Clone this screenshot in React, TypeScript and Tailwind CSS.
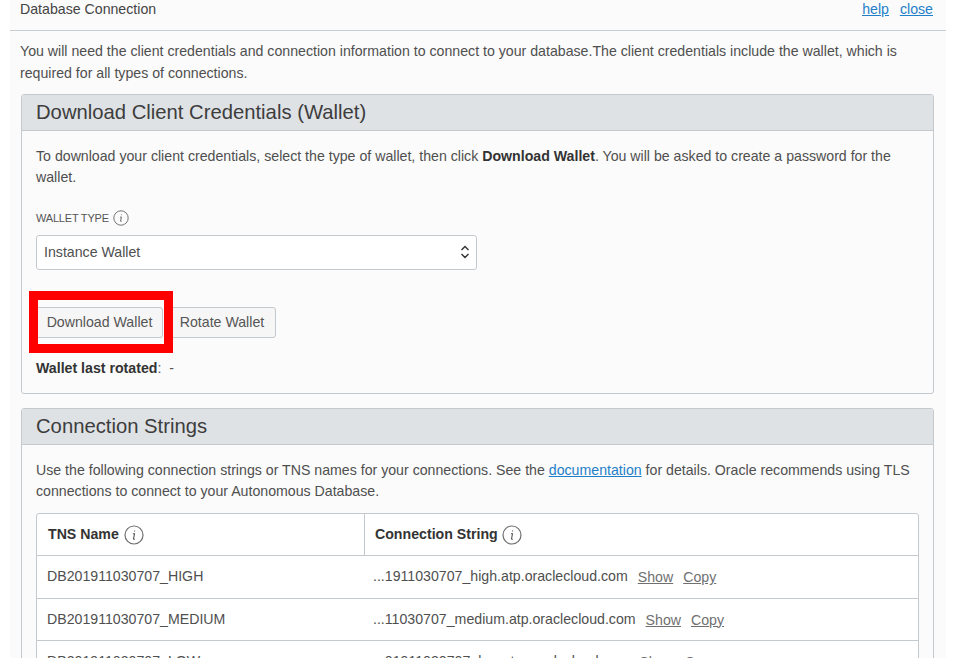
import React from "react";

const font = { fontFamily: '"Liberation Sans", Arial, sans-serif' };

const InfoIcon = ({ size }: { size: number }) => (
  <svg width={size} height={size} viewBox="0 0 20 20" fill="none" className="shrink-0">
    <circle cx="10" cy="10" r="9" stroke="#6f6f6f" strokeWidth="1.2" />
    <path d="M10.6 5.6v.9M8.9 8.8h1.6l-1 5c-.1.5.3.6 1.3.2" stroke="#555" strokeWidth="1.1" fill="none" />
  </svg>
);

const rows = [
  { name: "DB201911030707_HIGH", conn: "...1911030707_high.atp.oraclecloud.com" },
  { name: "DB201911030707_MEDIUM", conn: "...11030707_medium.atp.oraclecloud.com" },
  { name: "DB201911030707_LOW", conn: "...01911030707_low.atp.oraclecloud.com" },
];

const Card = ({ title, className, children }: { title: string; className?: string; children: React.ReactNode }) => (
  <section className={`ml-[11px] mr-[12px] rounded-[3px] border border-[#c4c9ce] ${className ?? ""}`}>
    <h2 className="flex h-[36px] items-center rounded-t-[3px] border-b border-[#c4c9ce] bg-[#dfe2e5] pl-[14px] text-[20.25px] font-normal text-[#3d3d3d]">
      {title}
    </h2>
    {children}
  </section>
);

export default function App() {
  return (
    <div className="h-[668px] overflow-hidden bg-white text-[14.16px] text-[#4f4f4f]" style={font}>
      <div className="ml-[10px] h-[658px] w-[936px] overflow-hidden bg-[#fbfbfb]">
        <header className="flex h-[31px] items-start justify-between border-b border-[#c9ced3] pr-[13px] pl-[10px] pt-[1px] leading-[16px]">
          <span className="text-[#444]">Database Connection</span>
          <span className="flex gap-[11px] text-[#1f7fc9] underline">
            <a href="#">help</a>
            <a href="#">close</a>
          </span>
        </header>

        <p className="mt-[9px] h-[54px] pl-[10px] pr-[30px] leading-[22px]">
          You will need the client credentials and connection information to connect to your database.The client
          credentials include the wallet, which is required for all types of connections.
        </p>

        <Card title="Download Client Credentials (Wallet)" className="h-[300px]">
          <div className="px-[14px] pt-[15px]">
            <p className="pr-[20px] leading-[21px]">
              To download your client credentials, select the type of wallet, then click{" "}
              <b className="text-[#333]">Download Wallet</b>. You will be asked to create a password for the wallet.
            </p>
            <div className="mt-[22px] flex items-center gap-[4px] text-[11px] tracking-[-0.2px] text-[#555]">
              WALLET TYPE <InfoIcon size={16} />
            </div>
            <div className="mt-[8px] flex h-[35px] w-[441px] items-center justify-between rounded-[3px] border border-[#c4c9ce] bg-white pl-[7px] pr-[6px]">
              <span className="pt-[2px]">Instance Wallet</span>
              <svg width="10" height="16" viewBox="0 0 10 16" fill="none" stroke="#333" strokeWidth="1.4">
                <path d="M1.5 6 5 2.5 8.500 6M1.5 10 5 13.500 8.500 10" />
              </svg>
            </div>
            <div className="relative mt-[37px] flex gap-[7px]">
              <button className="h-[31px] w-[127px] rounded-[3px] border border-[#c4c9ce] bg-[#f6f6f6] pt-[2px] text-[#555]">
                Download Wallet
              </button>
              <button className="h-[31px] w-[106px] rounded-[3px] border border-[#c4c9ce] bg-[#f6f6f6] pt-[2px] pr-[2px] text-[#555]">
                Rotate Wallet
              </button>
              <div className="pointer-events-none absolute left-[-7px] top-[-16px] h-[62px] w-[144px] border-[9px] border-[#ff0000]" />
            </div>
            <p className="mt-[22px] leading-[16px] text-[#333]">
              <b>Wallet last rotated</b>
              <span className="text-[#555]">:&nbsp;&nbsp;-</span>
            </p>
          </div>
        </Card>

        <Card title="Connection Strings" className="mt-[14px]">
          <div className="px-[14px] pt-[15px]">
            <p className="pr-[5px] leading-[21px]">
              Use the following connection strings or TNS names for your connections. See the{" "}
              <a href="#" className="text-[#1f7fc9] underline">documentation</a> for details. Oracle recommends using
              TLS connections to connect to your Autonomous Database.
            </p>
            <div className="mt-[11px] rounded-[3px] border border-[#c4c9ce] bg-white">
              <div className="grid h-[42px] grid-cols-[328px_1fr] border-b border-[#c4c9ce] font-bold text-[#333]">
                <div className="flex items-center gap-[5px] border-r border-[#c4c9ce] pl-[11px]">
                  TNS Name <InfoIcon size={20} />
                </div>
                <div className="flex items-center gap-[4px] pl-[10px]">
                  Connection String <InfoIcon size={20} />
                </div>
              </div>
              {rows.map((row) => (
                <div key={row.name} className="grid h-[42.5px] grid-cols-[328px_1fr] items-center border-b border-[#c4c9ce]">
                  <div className="pl-[10px]">{row.name}</div>
                  <div className="flex items-center pl-[8px]">
                    <span>{row.conn}</span>
                    <a href="#" className="ml-[10px] mt-[2px] text-[#707070] underline">Show</a>
                    <a href="#" className="ml-[10px] mt-[2px] text-[#707070] underline">Copy</a>
                  </div>
                </div>
              ))}
            </div>
          </div>
        </Card>
      </div>
    </div>
  );
}
